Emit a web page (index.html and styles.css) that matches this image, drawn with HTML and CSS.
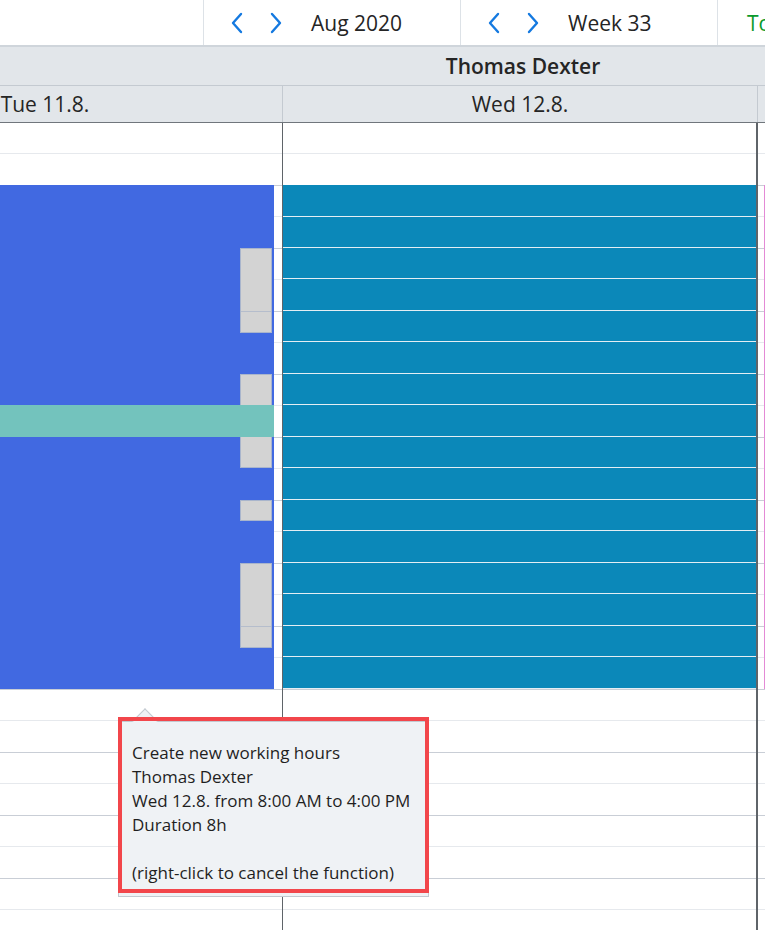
FILE: index.html
```html
<!DOCTYPE html>
<html lang="en">
  <head>
    <meta charset="UTF-8" />
    <meta name="viewport" content="width=device-width, initial-scale=1.0" />
    <title>Scheduler</title>
    <link rel="stylesheet" href="styles.css">
  </head>
  <body>
    <div class="page">
      <header class="toolbar">
        <div class="tb-spacer"></div>
        <div class="tb-nav">
          <button class="chev" type="button">
            <svg width="12" height="22" viewBox="0 0 12 22"><path d="M10 2 L2 11 L10 20" /></svg>
          </button>
          <button class="chev" type="button">
            <svg width="12" height="22" viewBox="0 0 12 22"><path d="M2 2 L10 11 L2 20" /></svg>
          </button>
          <span class="tb-label">Aug 2020</span>
        </div>
        <div class="tb-nav">
          <button class="chev" type="button">
            <svg width="12" height="22" viewBox="0 0 12 22"><path d="M10 2 L2 11 L10 20" /></svg>
          </button>
          <button class="chev" type="button">
            <svg width="12" height="22" viewBox="0 0 12 22"><path d="M2 2 L10 11 L2 20" /></svg>
          </button>
          <span class="tb-label">Week 33</span>
        </div>
        <div class="tb-today">Today</div>
      </header>

      <div class="scheduler">
        <div class="sched-inner">
          <div class="resource-row">
            <div class="resource-name">Thomas Dexter</div>
          </div>
          <div class="day-row">
            <div class="day-head">Tue 11.8.</div>
            <div class="day-head">Wed 12.8.</div>
            <div class="day-head"></div>
          </div>
          <div class="day-body">
            <div class="day-col">
              <!-- 8:00 - 16:00, 63px per hour, day starts 7:00 -->
              <div class="event ev-blue" style="top: 62px; height: 504px;"></div>
              <div class="marker" style="top: 125px; height: 85px;"><span style="top: 62px;"></span></div>
              <div class="marker" style="top: 251px; height: 94px;"></div>
              <div class="marker" style="top: 377px; height: 21px;"></div>
              <div class="marker" style="top: 440px; height: 85px;"><span style="top: 62px;"></span></div>
              <div class="event ev-mint" style="top: 282px; height: 32px;"></div>
            </div>
            <div class="day-col">
              <div class="event ev-teal" style="top: 62px; height: 504px;"></div>
            </div>
            <div class="day-col">
              <div class="event ev-pink" style="top: 62px; height: 504px;"></div>
            </div>
          </div>
        </div>
      </div>

      <div class="tooltip">
        <div class="tooltip-arrow"></div>
        <p>Create new working hours</p>
        <p>Thomas Dexter</p>
        <p>Wed 12.8. from 8:00 AM to 4:00 PM</p>
        <p>Duration 8h</p>
        <p>&nbsp;</p>
        <p>(right-click to cancel the function)</p>
      </div>
      <div class="highlight"></div>
    </div>
  </body>
</html>
```

FILE: styles.css
```css
body {
  margin: 0;
  font-family: "Open Sans", "Liberation Sans", sans-serif;
  color: #252525;
  background: #fff;
}

.page {
  position: relative;
  width: 765px;
  height: 930px;
  overflow: hidden;
}

/* toolbar */
.toolbar {
  display: flex;
  height: 45px;
  border-bottom: 2px solid #cfd5db;
}

.tb-spacer {
  flex: 0 0 203px;
}

.tb-nav {
  flex: 0 0 257px;
  display: flex;
  align-items: center;
  border-left: 1px solid #dde2e7;
  padding-left: 27px;
  box-sizing: border-box;
}

.chev {
  border: none;
  background: none;
  padding: 0;
  margin-right: 27px;
  width: 12px;
  height: 22px;
  display: flex;
}

.chev path {
  fill: none;
  stroke: #1479e0;
  stroke-width: 2.4;
  stroke-linecap: round;
  stroke-linejoin: round;
}

.tb-label {
  font-size: 21px;
  margin-left: 2px;
}

.tb-today {
  flex: 0 0 auto;
  display: flex;
  align-items: center;
  border-left: 1px solid #dde2e7;
  padding-left: 29px;
  font-size: 21px;
  color: #0a9a2c;
  white-space: nowrap;
}

/* scheduler */
.scheduler {
  overflow: hidden;
}

.sched-inner {
  margin-left: -192px;
  width: 1425px;
}

.resource-row {
  height: 38px;
  background: #e2e6ea;
  border-bottom: 1px solid #c4cad1;
  display: flex;
  align-items: center;
}

.resource-name {
  margin-left: 475px;
  width: 480px;
  text-align: center;
  font-size: 21px;
  font-weight: 600;
}

.day-row {
  display: grid;
  grid-template-columns: repeat(3, 475px);
  height: 36px;
  background: #e2e6ea;
  border-bottom: 1px solid #70767c;
}

.day-head {
  display: flex;
  align-items: center;
  justify-content: center;
  border-right: 1px solid #c4cad1;
  font-size: 21px;
}

.day-body {
  display: grid;
  grid-template-columns: repeat(3, 475px);
  height: 808px;
  background: repeating-linear-gradient(
    to bottom,
    transparent 0 30.5px,
    #e6e9ed 30.5px 31.5px,
    transparent 31.5px 62px,
    #c9ced6 62px 63px
  );
}

.day-col {
  position: relative;
  border-right: 2px solid #5f6469;
}

.day-col:first-child {
  border-right-width: 1px;
}

.event {
  position: absolute;
  left: 0;
  right: 0;
}

.ev-blue {
  right: 8px;
  background: #4169e1;
}

.ev-teal {
  background: repeating-linear-gradient(
    to bottom,
    #0b88b9 0 30.5px,
    #e4eef4 30.5px 31.5px
  );
}

.ev-mint {
  right: 8px;
  background: #73c3bd;
}

.ev-pink {
  left: 6px;
  border-left: 1px solid #e48ad6;
  background: #fff;
}

.marker {
  position: absolute;
  right: 10px;
  width: 32px;
  background: #d3d3d3;
  border: 1px solid #a9b5cc;
  box-sizing: border-box;
}

.marker span {
  position: absolute;
  left: 0;
  right: 0;
  height: 1px;
  background: #b5bdcc;
}

/* tooltip */
.tooltip {
  position: absolute;
  left: 118px;
  top: 721px;
  width: 311px;
  height: 176px;
  box-sizing: border-box;
  background: #eff2f5;
  border: 1px solid #c3c9d0;
  padding: 19px 0 0 13px;
  font-size: 17px;
  line-height: 24px;
  color: #1f1f1f;
}

.tooltip p {
  margin: 0;
  white-space: nowrap;
}

.tooltip-arrow {
  position: absolute;
  left: 17px;
  top: -10px;
  width: 17px;
  height: 17px;
  background: #eff2f5;
  border-left: 1px solid #c3c9d0;
  border-top: 1px solid #c3c9d0;
  transform: rotate(45deg);
}

.highlight {
  position: absolute;
  left: 118px;
  top: 717px;
  width: 311px;
  height: 176px;
  box-sizing: border-box;
  border: 4px solid #f2464b;
}
```
